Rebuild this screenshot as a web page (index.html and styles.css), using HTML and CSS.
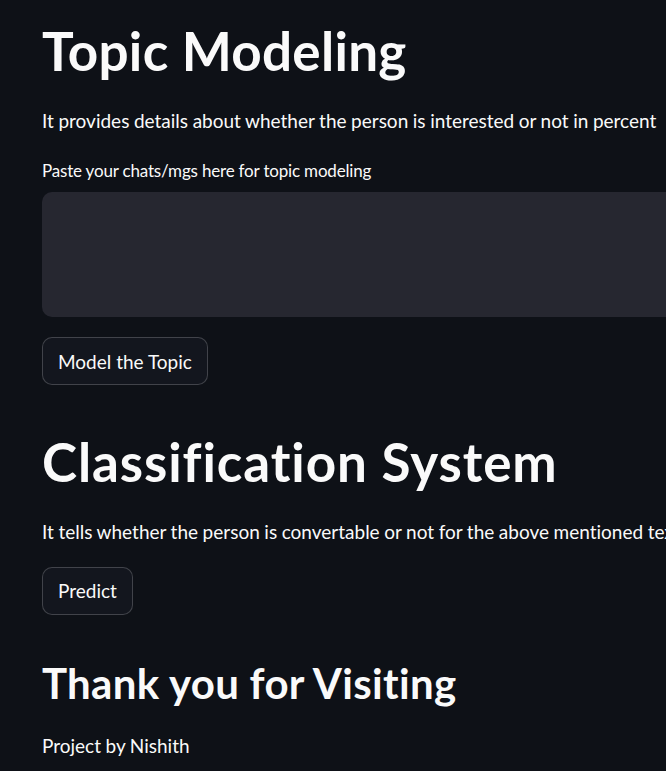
FILE: index.html
```html
<!DOCTYPE html>
<html lang="en">
<head>
<meta charset="utf-8">
<title>Topic Modeling</title>
<link rel="stylesheet" href="styles.css">
</head>
<body>
<main class="block">
  <h1 class="title">Topic Modeling</h1>
  <p class="text text-1">It provides details about whether the person is interested or not in percent</p>
  <label class="label" for="chats">Paste your chats/mgs here for topic modeling</label>
  <textarea id="chats" class="area"></textarea>
  <button class="btn btn-topic">Model the Topic</button>
  <h1 class="title title-2">Classification System</h1>
  <p class="text text-2">It tells whether the person is convertable or not for the above mentioned text</p>
  <button class="btn btn-predict">Predict</button>
  <h2 class="subtitle">Thank you for Visiting</h2>
  <p class="text text-3">Project by Nishith</p>
</main>
</body>
</html>
```

FILE: styles.css
```css
html, body {
  margin: 0;
  padding: 0;
  background: #0e1117;
  overflow: hidden;
}
body {
  width: 666px;
  height: 771px;
  font-family: Lato, "Liberation Sans", sans-serif;
  color: #fafafa;
  font-variant-ligatures: none;
}
.block {
  display: flex;
  flex-direction: column;
  align-items: flex-start;
  width: 920px;
  padding: 18.5px 0 0 42px;
}
.title {
  margin: 0;
  font-size: 53px;
  line-height: 64px;
  font-weight: 700;
  letter-spacing: 0.3px;
  white-space: nowrap;
}
.title-2 {
  margin-top: 44.5px;
  letter-spacing: 0.9px;
}
.text {
  margin: 23.5px 0 0;
  font-size: 19px;
  line-height: 30px;
  white-space: nowrap;
  word-spacing: -0.3px;
}
.text-2 {
  margin-top: 23px;
}
.text-3 {
  margin-top: 21.7px;
}
.label {
  margin-top: 23px;
  font-size: 17px;
  line-height: 24px;
  letter-spacing: -0.18px;
  white-space: nowrap;
}
.area {
  margin-top: 9px;
  width: 860px;
  height: 125px;
  box-sizing: border-box;
  background: #262730;
  border: none;
  border-radius: 10px;
  resize: none;
  outline: none;
}
.btn {
  margin-top: 20px;
  height: 48px;
  padding: 0 15px;
  box-sizing: border-box;
  display: flex;
  align-items: center;
  background: #13161e;
  color: #fafafa;
  border: 1px solid rgba(250, 250, 250, 0.2);
  border-radius: 10px;
  font-family: inherit;
  font-size: 19px;
}
.subtitle {
  margin: 42.7px 0 0;
  font-size: 42px;
  line-height: 52px;
  font-weight: 700;
  letter-spacing: 0.3px;
  white-space: nowrap;
}
```
